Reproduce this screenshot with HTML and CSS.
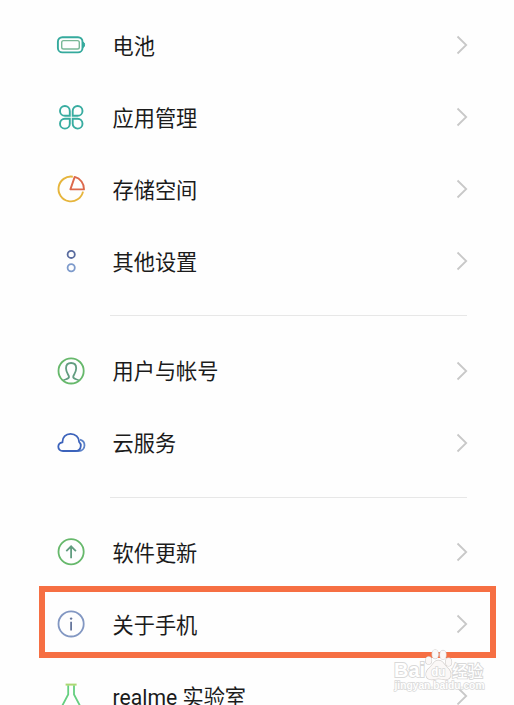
FILE: index.html
```html
<!DOCTYPE html>
<html lang="zh-CN">
  <head>
    <meta charset="UTF-8">
    <meta name="viewport" content="width=device-width, initial-scale=1.0">
    <title>设置</title>
    <link rel="stylesheet" href="styles.css">
  </head>
  <body>
    <svg class="defs" width="0" height="0">
      <symbol id="chevron" viewBox="0 0 12 20">
        <path d="M1.5 1.5 L10.2 10 L1.5 18.5"/>
      </symbol>
    </svg>

    <main class="settings">
      <div class="row">
        <svg class="icon" viewBox="0 0 30 30" fill="none">
          <rect x="1.9" y="7.2" width="24.6" height="15.2" rx="4.5" stroke="#35aa9d" stroke-width="1.9"/>
          <rect x="5.7" y="10.6" width="17.6" height="8.4" rx="1.8" stroke="#78b896" stroke-width="1.4"/>
          <path d="M27 12.2 Q28.6 12.4 28.6 14.8 Q28.6 17.2 27 17.4 Z" fill="#35aa9d" stroke="#35aa9d"/>
        </svg>
        <span class="label">电池</span>
        <svg class="chevron"><use href="#chevron"/></svg>
      </div>

      <div class="row">
        <svg class="icon" viewBox="0 0 30 30" fill="none" stroke="#38aca0" stroke-width="1.9">
          <path d="M13.8 13.8 H8.9 A4.9 4.9 0 1 1 13.8 8.9 Z"/>
          <path d="M16.7 13.8 V8.9 A4.9 4.9 0 1 1 21.6 13.8 Z"/>
          <path d="M13.8 16.8 V21.7 A4.9 4.9 0 1 1 8.9 16.8 Z"/>
          <path d="M16.7 16.8 H21.6 A4.9 4.9 0 1 1 16.7 21.7 Z"/>
        </svg>
        <span class="label">应用管理</span>
        <svg class="chevron"><use href="#chevron"/></svg>
      </div>

      <div class="row">
        <svg class="icon" viewBox="0 0 30 30" fill="none" stroke-width="1.9">
          <path d="M16.8 2.7 A12.4 12.4 0 1 0 27 17.6" stroke="#e6b53c"/>
          <path d="M18.7 2.9 L14.4 15.4 H28 A12.5 12.5 0 0 0 18.7 2.9 Z" stroke="#dc684b" stroke-linejoin="round"/>
        </svg>
        <span class="label">存储空间</span>
        <svg class="chevron"><use href="#chevron"/></svg>
      </div>

      <div class="row">
        <svg class="icon" viewBox="0 0 30 30" fill="none" stroke-width="1.8">
          <circle cx="15.2" cy="8.4" r="3.6" stroke="#596b9e"/>
          <circle cx="15.2" cy="21.7" r="3.6" stroke="#7d9acb"/>
        </svg>
        <span class="label">其他设置</span>
        <svg class="chevron"><use href="#chevron"/></svg>
      </div>

      <hr class="divider">

      <div class="row">
        <svg class="icon" viewBox="0 0 30 30" fill="none" stroke-width="1.8">
          <path d="M7.3 24.4 C9.4 23 13 23.1 13 21.1 C13 18.8 10 17 10 12.3 C10 9 12 7 15.1 7 C18.2 7 20.2 9 20.2 12.3 C20.2 17 17.2 18.8 17.2 21.1 C17.2 23.1 20.8 23 22.9 24.4" stroke="#629d80"/>
          <circle cx="15.1" cy="14.9" r="12.6" stroke="#66b86b"/>
        </svg>
        <span class="label">用户与帐号</span>
        <svg class="chevron"><use href="#chevron"/></svg>
      </div>

      <div class="row">
        <svg class="icon" viewBox="0 0 30 30" fill="none" stroke-width="1.8">
          <path d="M24 11.6 C27 12.4 28.5 14.7 28.5 17.2 C28.5 20.7 26 23 22.6 23 H19" stroke="#5c82c8"/>
          <path d="M7 23 C4.2 23 2.3 21.3 2.3 18.8 C2.3 16.4 4.1 14.6 6.4 14.3 C6.3 9.3 9.8 5.9 14.5 5.9 C19.5 5.9 23.1 9.4 23.1 13.8 C24.5 15.1 25 16.5 24.8 18 C24.6 21 22.4 23 19.2 23 Z" stroke="#3c63bb"/>
        </svg>
        <span class="label">云服务</span>
        <svg class="chevron"><use href="#chevron"/></svg>
      </div>

      <hr class="divider">

      <div class="row">
        <svg class="icon" viewBox="0 0 30 30" fill="none" stroke-width="1.8">
          <circle cx="15.1" cy="14.8" r="12.6" stroke="#66b86b"/>
          <path d="M15.1 21.2 V9.4 M10.3 14.1 L15.1 9.3 L19.9 14.1" stroke="#629d80"/>
        </svg>
        <span class="label">软件更新</span>
        <svg class="chevron"><use href="#chevron"/></svg>
      </div>

      <div class="row highlighted">
        <svg class="icon" viewBox="0 0 30 30" fill="none">
          <circle cx="15.1" cy="14.9" r="12.6" stroke="#8297c2" stroke-width="1.8"/>
          <path d="M15.1 12.8 V21.4" stroke="#66769c" stroke-width="1.8"/>
          <circle cx="15.1" cy="9.6" r="1.2" fill="#66769c"/>
        </svg>
        <span class="label">关于手机</span>
        <svg class="chevron"><use href="#chevron"/></svg>
      </div>

      <div class="row">
        <svg class="icon" viewBox="0 0 30 30" fill="none" stroke-width="1.8">
          <path d="M12.2 4.2 V13.5 L4.5 28 H25.7 L18 13.5 V4.2" stroke="#65cf80"/>
          <path d="M9.6 3.6 H20.6" stroke="#acd873" stroke-width="2"/>
        </svg>
        <span class="label">realme 实验室</span>
        <svg class="chevron"><use href="#chevron"/></svg>
      </div>
    </main>

    <div class="watermark">
      <svg viewBox="0 0 100 46">
        <g class="paw">
          <ellipse cx="38.6" cy="13.5" rx="2.9" ry="3.7"/>
          <ellipse cx="45.2" cy="7.2" rx="3" ry="4.4"/>
          <ellipse cx="53" cy="7.8" rx="3" ry="4.4"/>
          <ellipse cx="58.6" cy="15" rx="2.9" ry="3.9"/>
          <path d="M48.3 13.5 C44 13.5 43 18 39.5 21 C34 25.5 35.5 32.5 41.5 32.5 C45 32.5 46 31.5 48.3 31.5 C51 31.5 52 32.5 55.5 32.5 C61.5 32.5 62.5 25.5 57.5 21 C54 18 53 13.5 48.3 13.5 Z"/>
        </g>
        <text class="brand" x="4" y="30" textLength="31" lengthAdjust="spacingAndGlyphs" font-size="20">Bai</text>
        <text class="brand small" x="41.2" y="29" textLength="14" lengthAdjust="spacingAndGlyphs" font-size="12">du</text>
        <text class="brand cjk" x="62" y="29.5" font-size="15.5">经验</text>
        <text class="brand small" x="4.5" y="42" textLength="90" lengthAdjust="spacingAndGlyphs" font-size="10">jingyan.baidu.com</text>
      </svg>
    </div>
  </body>
</html>
```

FILE: styles.css
```css
:root {
  --text-color: #1b1b1b;
  --chevron-color: #c8c8c8;
  --divider-color: #e7e7e7;
  --highlight-color: #f66f43;
}

body {
  position: relative;
  height: 705px;
  margin: 0;
  overflow: hidden;
  background: #fefefe;
  color: var(--text-color);
  font-family: Roboto, "Noto Sans CJK SC", sans-serif;
}

.defs {
  position: absolute;
}

.settings {
  padding: 9px 46px 0 56px;
}

.row {
  position: relative;
  display: flex;
  align-items: center;
  height: 72px;
}

.icon {
  flex: none;
  width: 30px;
  height: 30px;
}

.label {
  flex: 1;
  margin-left: 26.5px;
  padding-top: 3px;
  font-size: 21.2px;
  line-height: 30px;
  white-space: nowrap;
}

.chevron {
  width: 12px;
  height: 20px;
  fill: none;
  stroke: var(--chevron-color);
  stroke-width: 1.8;
}

.divider {
  height: 1px;
  margin: 18px 1px 18.5px 54px;
  border: 0;
  background: var(--divider-color);
}

/* frame around the selected row, wider than the row itself */
.highlighted::after {
  content: "";
  position: absolute;
  top: -2px;
  left: -17px;
  right: -28px;
  height: 72px;
  box-sizing: border-box;
  border: 6px solid var(--highlight-color);
}

.watermark {
  position: absolute;
  left: 390px;
  top: 647px;
  width: 100px;
  height: 46px;
}

.watermark svg {
  display: block;
  width: 100%;
  height: 100%;
}

.paw,
.brand {
  fill: #fff;
  stroke: #d8d8d8;
  stroke-width: 1;
  paint-order: stroke;
}

.paw {
  fill: #fbf8f7;
  stroke: #d4d0ce;
  stroke-width: 1.3;
}

.brand {
  font-family: "Liberation Sans", "Noto Sans CJK SC", sans-serif;
  font-weight: 700;
  stroke-width: 1.8;
}

.brand.cjk {
  font-weight: 500;
}

.brand.small {
  stroke-width: 1.4;
}
```
